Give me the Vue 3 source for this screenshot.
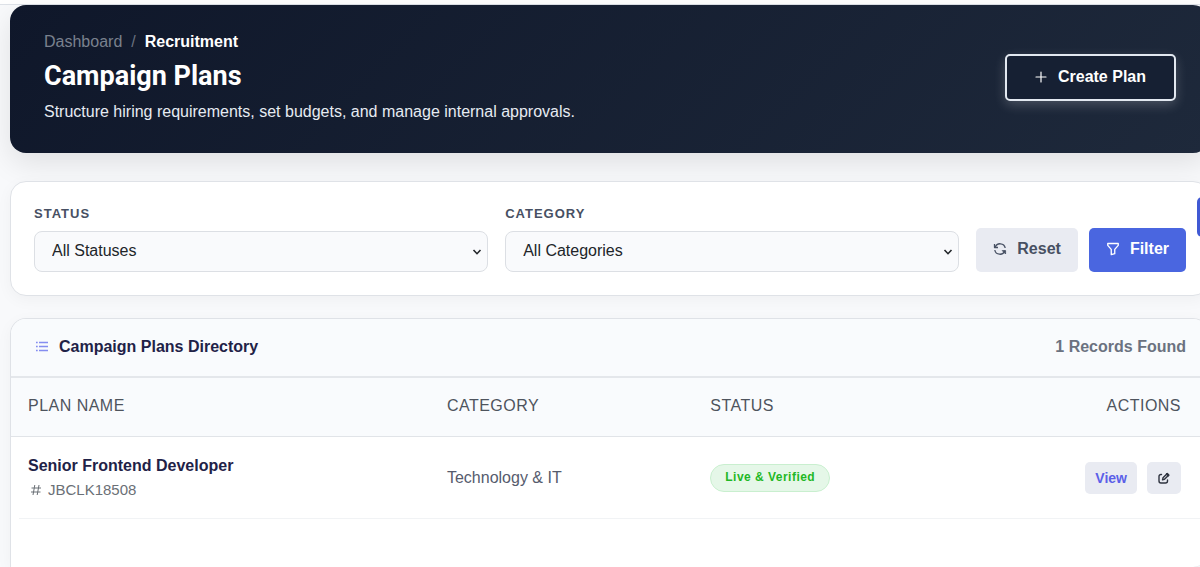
<script setup>
import { ref } from 'vue'

const status = ref('')
const category = ref('')
const statuses = ['Draft', 'Pending Approval', 'Live & Verified']
const categories = ['Technology & IT', 'Finance', 'Operations']
const plans = [
  { name: 'Senior Frontend Developer', code: 'JBCLK18508', category: 'Technology & IT', status: 'Live & Verified' },
]

function reset() {
  status.value = ''
  category.value = ''
}
</script>

<template>
  <div class="page">
    <header class="topbar"></header>
    <main class="content">
      <section class="hero">
        <div>
          <nav class="crumbs" aria-label="Breadcrumb">
            <a href="#">Dashboard</a><span class="sep">/</span><strong>Recruitment</strong>
          </nav>
          <h1>Campaign Plans</h1>
          <p>Structure hiring requirements, set budgets, and manage internal approvals.</p>
        </div>
        <button class="create" type="button">
          <svg width="12" height="12" viewBox="0 0 12 12" fill="none" stroke="currentColor" stroke-width="1.2" stroke-linecap="round" aria-hidden="true">
            <path d="M6 1v10M1 6h10" />
          </svg>
          Create Plan
        </button>
      </section>

      <form class="card filters" @submit.prevent>
        <div class="field">
          <label for="status">STATUS</label>
          <div class="select">
            <select id="status" v-model="status">
              <option value="">All Statuses</option>
              <option v-for="s in statuses" :key="s">{{ s }}</option>
            </select>
            <svg width="10" height="8" viewBox="0 0 10 8" fill="none" stroke="currentColor" stroke-width="1.6" aria-hidden="true"><path d="M1.5 2 5 5.7 8.5 2" /></svg>
          </div>
        </div>
        <div class="field">
          <label for="category">CATEGORY</label>
          <div class="select">
            <select id="category" v-model="category">
              <option value="">All Categories</option>
              <option v-for="c in categories" :key="c">{{ c }}</option>
            </select>
            <svg width="10" height="8" viewBox="0 0 10 8" fill="none" stroke="currentColor" stroke-width="1.6" aria-hidden="true"><path d="M1.5 2 5 5.7 8.5 2" /></svg>
          </div>
        </div>
        <div class="buttons">
          <button class="btn reset" type="button" @click="reset">
            <svg width="14" height="14" viewBox="0 0 14 14" fill="none" stroke="currentColor" stroke-width="1.3" stroke-linejoin="round" aria-hidden="true">
              <path d="M2.2 5.2A5.2 5.2 0 0 1 12.2 6M11.800 8.800A5.2 5.2 0 0 1 1.800 8" />
              <path d="M1.500 2v3.500H5" />
              <path d="M12.600 12V8.600H9.200z" fill="currentColor" stroke-width=".8" />
            </svg>
            Reset
          </button>
          <button class="btn filter" type="submit">
            <svg width="14" height="14" viewBox="0 0 16 16" fill="none" stroke="currentColor" stroke-width="1.5" stroke-linejoin="round" aria-hidden="true">
              <path d="M2 1.7h12v2.1L10 8.500v4.800l-4 1.200V8.500L2 3.800z" />
            </svg>
            Filter
          </button>
        </div>
      </form>

      <section class="card directory">
        <div class="dir-head">
          <h2>
            <svg width="14" height="14" viewBox="0 0 14 14" fill="none" stroke="currentColor" stroke-width="1.3" aria-hidden="true">
              <path d="M4 2.500h9M4 6.500h9M4 10.500h9M1 2.500h1.700M1 6.500h1.700M1 10.500h1.700" />
            </svg>
            Campaign Plans Directory
          </h2>
          <span class="count">{{ plans.length }} Records Found</span>
        </div>
        <table>
          <thead>
            <tr>
              <th class="c-name" scope="col">PLAN NAME</th>
              <th class="c-cat" scope="col">CATEGORY</th>
              <th scope="col">STATUS</th>
              <th class="c-act" scope="col">ACTIONS</th>
            </tr>
          </thead>
          <tbody>
            <tr v-for="p in plans" :key="p.code">
              <td>
                <div class="name">{{ p.name }}</div>
                <div class="code">
                  <svg width="12" height="12" viewBox="0 0 12 12" fill="none" stroke="currentColor" aria-hidden="true">
                    <path d="M4.8 1 3 11M9 1 7.200 11M1.500 4h9.500M1 8h9.500" />
                  </svg>
                  {{ p.code }}
                </div>
              </td>
              <td class="cat">{{ p.category }}</td>
              <td><span class="badge">{{ p.status }}</span></td>
              <td>
                <div class="actions">
                  <button class="mini view" type="button">View</button>
                  <button class="mini edit" type="button" aria-label="Edit plan">
                    <svg width="12" height="12" viewBox="0 0 12 12" fill="none" stroke="currentColor" stroke-width="1.4" stroke-linecap="round" stroke-linejoin="round" aria-hidden="true">
                      <path d="M3.500 2.500H3a2 2 0 0 0-2 2V9a2 2 0 0 0 2 2h4.500a2 2 0 0 0 2-2V8" />
                      <path d="M4.500 7.800 5 5.800 9.300 1.500l1.500 1.500-4.300 4.300z" />
                      <path d="m8.800 2 1.500 1.500" stroke-width="2" />
                    </svg>
                  </button>
                </div>
              </td>
            </tr>
          </tbody>
        </table>
      </section>
    </main>
    <button class="drawer" type="button" aria-label="Open settings"></button>
  </div>
</template>

<style>
body {
  margin: 0;
  background: #f8f9fb;
}
</style>

<style scoped>
.page {
  min-height: 100vh;
  display: flex;
  flex-direction: column;
  overflow: hidden;
  box-sizing: border-box;
  font: 16px/24px "Liberation Sans", Arial, sans-serif;
  color: #212529;
}
.topbar {
  height: 4px;
  background: #fff;
  border-bottom: 1px solid #dee2e8;
}
.content {
  flex: 1;
  display: flex;
  flex-direction: column;
  margin: 0 -9px 0 10px;
}
button,
select {
  font: inherit;
  margin: 0;
  cursor: pointer;
}
svg {
  flex: none;
}
.hero {
  display: flex;
  justify-content: space-between;
  align-items: center;
  padding: 25px 33px 29px 34px;
  border-radius: 16px;
  color: #fff;
  background: linear-gradient(135deg, #0f172a, #1e293b);
  box-shadow: 0 10px 30px rgba(0, 0, 0, 0.1);
}
.crumbs {
  display: flex;
  gap: 9px;
}
.crumbs a {
  color: #7a818e;
  text-decoration: none;
}
.sep {
  color: #6b7280;
}
h1 {
  margin: 4px 0 6px;
  font: 700 27px/36px Roboto, sans-serif;
}
.hero p {
  margin: 0;
  color: #e6ebf2;
}
.create {
  display: flex;
  align-items: center;
  gap: 11px;
  padding: 9px 28px 10px;
  border: 2px solid #e2e8f0;
  border-radius: 5px;
  background: #162033;
  color: #fff;
  font-weight: 700;
  box-shadow: 0 4px 12px rgba(255, 255, 255, 0.2);
}
.card {
  background: #fff;
  border: 1px solid #dfe2e7;
  border-radius: 16px;
  box-shadow: 0 4px 16px rgba(0, 0, 0, 0.04);
}
.filters {
  display: flex;
  gap: 17px;
  align-items: flex-end;
  margin-top: 28px;
  padding: 23px 22px 23px 23px;
}
.field {
  flex: 1;
}
.field label {
  display: block;
  margin-bottom: 8px;
  font-size: 13px;
  font-weight: 700;
  line-height: 18px;
  letter-spacing: 1px;
  color: #475063;
}
.select {
  position: relative;
}
.select select {
  display: block;
  width: 100%;
  appearance: none;
  padding: 7px 32px 8px 17px;
  border: 1px solid #dcdfe4;
  border-radius: 8px;
  background: #f9fafc;
  color: #212529;
}
.select svg {
  position: absolute;
  right: 6px;
  top: 17px;
  pointer-events: none;
}
.buttons {
  display: flex;
  gap: 11px;
}
.btn {
  display: flex;
  align-items: center;
  gap: 10px;
  padding: 9px 17px 11px;
  border: 0;
  border-radius: 5px;
  font-weight: 700;
}
.reset {
  background: #e9ebf2;
  color: #475063;
}
.filter {
  background: #4a66e0;
  color: #fff;
}
.directory {
  flex: 1;
  margin-top: 22px;
  border-bottom: 0;
  border-bottom-left-radius: 0;
  overflow: hidden;
}
.dir-head {
  display: flex;
  justify-content: space-between;
  align-items: center;
  padding: 16px 22px 17px 24px;
  background: #f9fbfd;
  border-bottom: 2px solid #e4e7eb;
}
h2 {
  display: flex;
  align-items: center;
  gap: 10px;
  margin: 0;
  font-size: 16px;
  color: #1f2247;
}
h2 svg {
  color: #858df0;
}
.count {
  font-weight: 700;
  color: #6b7280;
}
table {
  width: 100%;
  border-collapse: collapse;
  table-layout: fixed;
}
th {
  box-sizing: border-box;
  padding: 16px 17px 18px;
  text-align: left;
  font-weight: 400;
  letter-spacing: 0.03em;
  color: #4e545d;
  background: #f9fbfd;
  border-bottom: 1px solid #e1e4e8;
}
.c-name {
  width: 35%;
}
.c-cat {
  width: 22%;
}
.c-act {
  text-align: right;
}
th:last-child,
td:last-child {
  padding-right: 27px;
}
td {
  padding: 17px;
  background: linear-gradient(#f1f3f5, #f1f3f5) left bottom / 100% 1px no-repeat;
}
td:first-child {
  background-position: 8px bottom;
}
.name {
  font-weight: 700;
  color: #1f2247;
}
.code {
  display: flex;
  align-items: center;
  gap: 6px;
  padding-left: 2px;
  font-size: 15px;
  color: #6b7076;
}
.cat {
  color: #565b6d;
}
.badge {
  display: inline-block;
  padding: 3px 14px 5px;
  border: 1px solid #c9efcf;
  border-radius: 14px;
  background: #e5f7e8;
  color: #1fb825;
  font-size: 12px;
  font-weight: 700;
  line-height: 18px;
  letter-spacing: 0.04em;
}
.actions {
  display: flex;
  justify-content: flex-end;
  gap: 10px;
}
.mini {
  display: flex;
  align-items: center;
  justify-content: center;
  height: 32px;
  padding: 0 10px;
  border: 0;
  border-radius: 5px;
  background: #e9ebf2;
  font-size: 14px;
  font-weight: 700;
}
.view {
  color: #5b60e8;
}
.edit {
  padding: 0 11px;
  color: #2f3440;
}
.drawer {
  position: fixed;
  top: 197px;
  right: -37px;
  width: 40px;
  height: 40px;
  border: 0;
  border-radius: 5px;
  background: #4059d4;
}
</style>
